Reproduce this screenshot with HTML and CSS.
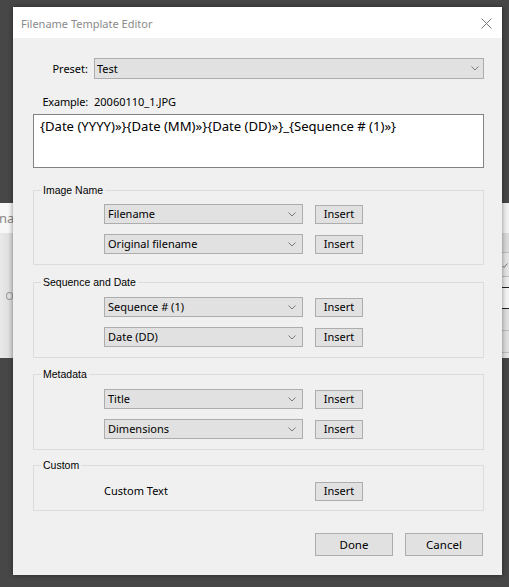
FILE: index.html
```html
<!DOCTYPE html>
<html>
<head>
<meta charset="utf-8">
<title>Filename Template Editor</title>
<link rel="stylesheet" href="styles.css">
</head>
<body>
<div class="desk">
  <div class="bgwin bg-left">
    <div class="bg-head"><span class="bg-text">na</span></div>
    <div class="bg-body"><span class="radio"></span></div>
  </div>
  <div class="bgwin bg-right">
    <div class="bg-head"></div>
    <div class="stripe s1"></div>
    <div class="stripe s2"><svg class="tick" width="6" height="5" viewBox="0 0 6 5"><path d="M0.5 3 L2 4.5 L5.5 0.5" fill="none" stroke="#777" stroke-width="1"/></svg></div>
    <div class="stripe s3"></div>
    <div class="stripe s4"></div>
    <div class="stripe s5"></div>
    <div class="stripe s6"></div>
  </div>

  <div class="dialog">
    <div class="titlebar">
      <span class="title">Filename Template Editor</span>
      <svg class="close" width="11" height="11" viewBox="0 0 11 11"><path d="M0.5 0.5 L10.5 10.5 M10.5 0.5 L0.5 10.5" stroke="#7a7a7a" stroke-width="1" fill="none"/></svg>
    </div>
    <div class="content">
      <div class="field-row preset-row">
        <span class="field-label">Preset:</span>
        <div class="select select-wide"><span>Test</span><svg class="chev" width="8" height="5" viewBox="0 0 8 5"><path d="M0.5 0.5 L4 4 L7.5 0.5" fill="none" stroke="#7a7a7a" stroke-width="1"/></svg></div>
      </div>
      <div class="field-row example-row">
        <span class="field-label">Example:</span>
        <span class="example-value">20060110_1.JPG</span>
      </div>
      <div class="template">{Date (YYYY)»}{Date (MM)»}{Date (DD)»}_{Sequence # (1)»}</div>

      <fieldset class="group g1">
        <legend>Image Name</legend>
        <div class="token-row"><div class="select"><span>Filename</span><svg class="chev" width="8" height="5" viewBox="0 0 8 5"><path d="M0.5 0.5 L4 4 L7.5 0.5" fill="none" stroke="#7a7a7a" stroke-width="1"/></svg></div><button class="btn insert">Insert</button></div>
        <div class="token-row"><div class="select"><span>Original filename</span><svg class="chev" width="8" height="5" viewBox="0 0 8 5"><path d="M0.5 0.5 L4 4 L7.5 0.5" fill="none" stroke="#7a7a7a" stroke-width="1"/></svg></div><button class="btn insert">Insert</button></div>
      </fieldset>

      <fieldset class="group g2">
        <legend>Sequence and Date</legend>
        <div class="token-row"><div class="select"><span>Sequence # (1)</span><svg class="chev" width="8" height="5" viewBox="0 0 8 5"><path d="M0.5 0.5 L4 4 L7.5 0.5" fill="none" stroke="#7a7a7a" stroke-width="1"/></svg></div><button class="btn insert">Insert</button></div>
        <div class="token-row"><div class="select"><span>Date (DD)</span><svg class="chev" width="8" height="5" viewBox="0 0 8 5"><path d="M0.5 0.5 L4 4 L7.5 0.5" fill="none" stroke="#7a7a7a" stroke-width="1"/></svg></div><button class="btn insert">Insert</button></div>
      </fieldset>

      <fieldset class="group g3">
        <legend>Metadata</legend>
        <div class="token-row"><div class="select"><span>Title</span><svg class="chev" width="8" height="5" viewBox="0 0 8 5"><path d="M0.5 0.5 L4 4 L7.5 0.5" fill="none" stroke="#7a7a7a" stroke-width="1"/></svg></div><button class="btn insert">Insert</button></div>
        <div class="token-row"><div class="select"><span>Dimensions</span><svg class="chev" width="8" height="5" viewBox="0 0 8 5"><path d="M0.5 0.5 L4 4 L7.5 0.5" fill="none" stroke="#7a7a7a" stroke-width="1"/></svg></div><button class="btn insert">Insert</button></div>
      </fieldset>

      <fieldset class="group g4">
        <legend>Custom</legend>
        <div class="token-row"><span class="custom-label">Custom Text</span><button class="btn insert">Insert</button></div>
      </fieldset>

      <div class="actions">
        <button class="btn action">Done</button>
        <button class="btn action">Cancel</button>
      </div>
    </div>
  </div>
</div>
</body>
</html>
```

FILE: styles.css
```css
* { box-sizing: border-box; }
html, body { margin: 0; padding: 0; }
body {
  width: 509px;
  height: 587px;
  overflow: hidden;
  background: #474747;
  font-family: "Noto Sans", "Liberation Sans", sans-serif;
  font-size: 11px;
  color: #000;
}
.desk { position: relative; width: 509px; height: 587px; }

/* background windows peeking out */
.bgwin { position: absolute; top: 203px; height: 155px; overflow: hidden; }
.bg-left { left: 0; width: 14px; background: linear-gradient(to right, #e9e9e9, #dadada); }
.bg-right { left: 500px; width: 9px; background: #e3e3e3; }
.bg-head { height: 30px; background: #f7f7f7; position: relative; }
.bg-right .bg-head { background: #f0f0f0; }
.bg-text { position: absolute; left: -1px; top: 6px; color: #888; font-size: 13px; }
.bg-body { position: relative; height: 125px; }
.radio { position: absolute; left: 6px; top: 59px; width: 7px; height: 8px; border: 1px solid #9a9a9a; border-radius: 50%; }
.stripe { height: 22px; border-bottom: 1px solid #bdbdbd; position: relative; }
.s1 { background: #d9d9d9; height: 20px; }
.s2 { background: #e3e3e3; height: 24px; border-bottom: 1px solid #bcbcbc; }
.s3 { background: #eaeaea; height: 11px; border-bottom: 1px solid #222; }
.s4 { background: #f3f3f3; height: 21px; border-bottom: 1px solid #222; }
.s5 { background: #dedede; height: 22px; }
.s6 { background: #dedede; height: 22px; }
.tick { position: absolute; left: 2px; top: 10px; }

/* dialog */
.dialog {
  position: absolute;
  left: 13px;
  top: 7px;
  width: 489px;
  height: 568px;
  background: #f0f0f0;
  box-shadow: 0 0 5px rgba(0,0,0,0.45);
  display: flex;
  flex-direction: column;
}
.titlebar {
  height: 31px;
  background: #fff;
  display: flex;
  align-items: center;
  justify-content: space-between;
  padding: 1px 10px 0 8px;
}
.title { color: #8a8a8a; font-size: 11px; }
.close { display: block; }

.content { padding: 20px 18px 0 20px; display: flex; flex-direction: column; }

.field-row { display: grid; grid-template-columns: 55px 1fr; column-gap: 6px; align-items: center; }
.field-label { text-align: right; }
.example-row { margin-top: 15px; height: 16px; line-height: 16px; }
.example-row .field-label { letter-spacing: -0.2px; }

.select {
  height: 20px;
  background: #e1e1e1;
  border: 1px solid #adadad;
  display: flex;
  align-items: center;
  justify-content: space-between;
  padding: 0 6px 0 3px;
  line-height: 16px;
}
.select-wide { height: 21px; padding-left: 2px; padding-right: 4px; }
.chev { display: block; }

.template {
  margin-top: 4px;
  height: 54px;
  background: #fff;
  border: 1px solid #828282;
  padding: 3px 6px;
  font-size: 13.1px;
  line-height: 17px;
  white-space: nowrap;
}

.group {
  margin: 11px 0 0 0;
  padding: 9px 0 10px 0;
  border: 1px solid #dcdcdc;
  min-width: 0;
  display: flex;
  flex-direction: column;
  row-gap: 10px;
}
.g1 { margin-top: 16px; padding-top: 8px; }
.g3 { margin-top: 10px; }
.g4 { margin-top: 9px; padding-top: 10px; padding-bottom: 9px; }
.group legend {
  font-family: "Liberation Sans", sans-serif;
  font-size: 10.5px;
  line-height: 12px;
  height: 12px;
  padding: 0 2px;
  margin-left: 7px;
}

.token-row { display: grid; grid-template-columns: 199px 48px; column-gap: 12px; align-items: center; margin-left: 70px; }
.custom-label { line-height: 20px; }

.btn {
  font-family: inherit;
  font-size: 11px;
  color: #000;
  background: #e1e1e1;
  border: 1px solid #adadad;
  border-radius: 0;
  padding: 0;
  margin: 0;
  line-height: 16px;
}
.insert { height: 19px; }

.actions { margin-top: 22px; display: flex; justify-content: flex-end; column-gap: 12px; padding-right: 1px; }
.action { width: 78px; height: 23px; font-size: 11.5px; }
```
